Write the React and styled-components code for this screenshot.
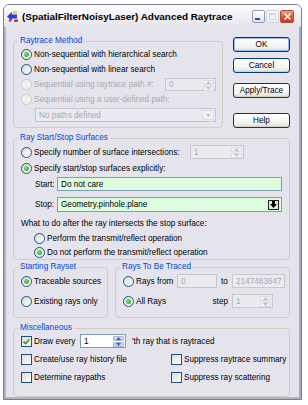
import React from 'react';
import styled, { createGlobalStyle, css } from 'styled-components';

const Global = createGlobalStyle`
  html, body { margin: 0; padding: 0; background: #ffffff; }
  body { font-family: "Liberation Sans", Arial, sans-serif; font-size: 8.2px; color: #000; }
  * { box-sizing: border-box; }
`;

const Window = styled.div`
  margin: 4px 0 0 3px;
  width: 299px;
  height: 396px;
  border: 1px solid #7c7c94;
  border-radius: 6px 6px 0 0;
  background: #e5e4ec;
  display: flex;
  flex-direction: column;
  overflow: hidden;
`;

const TitleBar = styled.div`
  height: 22px;
  flex: 0 0 22px;
  display: flex;
  align-items: center;
  padding: 0 7px 0 2px;
  background: linear-gradient(#fdfdfe, #eeeef3 60%, #e4e4ea);
`;

const TitleText = styled.div`
  flex: 1;
  margin-left: 3px;
  font-weight: bold;
  font-size: 9.9px;
  color: #000;
  white-space: nowrap;
`;

const TitleButtons = styled.div`
  display: flex;
  gap: 1px;
  align-items: center;
`;

const TitleButton = styled.div`
  width: 13px;
  height: 13px;
  border-radius: 2px;
  display: flex;
  align-items: center;
  justify-content: center;
  ${p => p.$kind === 'min' && css`
    border: 1px solid #8f9cb8;
    background: linear-gradient(#ffffff, #dfe2ec);
  `}
  ${p => p.$kind === 'max' && css`
    border: 1px solid #cdd1dc;
    background: linear-gradient(#fbfbfd, #eceef3);
  `}
  ${p => p.$kind === 'close' && css`
    width: 14px;
    border: 1px solid #b24a33;
    background: linear-gradient(#f2a088, #e05a38 50%, #c9391a);
  `}
`;

const Body = styled.div`
  flex: 1;
  display: flex;
  flex-direction: column;
  padding: 9px 9px 0 7px;
  border: 2px solid #b3b3c6;
  border-top: none;
  border-right-color: #a9a9bc;
`;

const TopRow = styled.div`
  display: flex;
  gap: 10px;
`;

const ButtonColumn = styled.div`
  display: flex;
  flex-direction: column;
  width: 57px;
`;

const PushButton = styled.button`
  height: 15px;
  margin-top: ${p => p.$mt}px;
  padding: 0;
  font: inherit;
  color: #000;
  border: 1px solid #003c74;
  border-radius: 3px;
  background: linear-gradient(#ffffff, #f3f3ef 70%, #dcdbd4);
  box-shadow: ${p => (p.$default ? 'inset 0 0 0 1px #97b8e8' : 'inset 0 -1px 0 #d6d0c5')};
`;

const Group = styled.fieldset`
  margin: ${p => p.$mt || 0}px 0 0;
  padding: ${p => p.$pt || 0}px ${p => p.$pr ?? 6}px 0 7px;
  border: 1px solid #d0d0c2;
  border-radius: 4px;
  min-width: 0;
  width: ${p => (p.$w ? `${p.$w}px` : 'auto')};
  flex: ${p => (p.$w ? '0 0 auto' : '1')};
  height: ${p => p.$h}px;
  display: flex;
  flex-direction: column;
`;

const Legend = styled.legend`
  color: #0046d5;
  padding: 0 2px;
  margin-left: -3px;
  line-height: 10px;
  font-size: 8.2px;
`;

const Row = styled.div`
  display: flex;
  align-items: center;
  height: ${p => p.$h || 15}px;
  margin-top: ${p => p.$mt || 0}px;
  margin-left: ${p => p.$ml || 0}px;
  white-space: nowrap;
`;

const OptionLabel = styled.label`
  display: flex;
  align-items: center;
  gap: 2px;
  color: ${p => (p.$disabled ? '#a9a9b2' : '#000')};
  width: ${p => (p.$w ? `${p.$w}px` : 'auto')};
  flex: ${p => (p.$grow ? '1' : '0 0 auto')};
  white-space: nowrap;
`;

const RadioCircle = styled.span`
  width: 11px;
  height: 11px;
  flex: 0 0 11px;
  border-radius: 50%;
  border: 1px solid ${p => (p.$disabled ? '#cfcdc4' : '#1c5180')};
  background: ${p => (p.$disabled ? '#f2f1f2' : 'linear-gradient(135deg, #dcdbd5, #ffffff)')};
  display: flex;
  align-items: center;
  justify-content: center;
  &::after {
    content: '';
    display: ${p => (p.$checked ? 'block' : 'none')};
    width: 5px;
    height: 5px;
    border-radius: 50%;
    background: radial-gradient(circle at 35% 35%, #7be07b, #21a121);
  }
`;

const CheckBox = styled.span`
  width: 11px;
  height: 11px;
  flex: 0 0 11px;
  border: 1px solid #1c5180;
  background: linear-gradient(135deg, #dcdbd5, #ffffff);
  display: flex;
  align-items: center;
  justify-content: center;
`;

const Radio = ({ checked, disabled, children, w, grow }) => (
  <OptionLabel $disabled={disabled} $w={w} $grow={grow}>
    <RadioCircle $checked={checked} $disabled={disabled} />
    <span>{children}</span>
  </OptionLabel>
);

const Check = ({ checked, children, w }) => (
  <OptionLabel $w={w}>
    <CheckBox>
      {checked && (
        <svg width="7" height="7" viewBox="0 0 7 7">
          <path d="M0.5 3.5 L2.7 5.6 L6.5 1.2" fill="none" stroke="#21a121" strokeWidth="1.6" />
        </svg>
      )}
    </CheckBox>
    <span>{children}</span>
  </OptionLabel>
);

const Field = styled.div`
  position: relative;
  display: flex;
  align-items: center;
  width: ${p => p.$w}px;
  height: ${p => p.$h || 14}px;
  margin-left: ${p => p.$ml || 0}px;
  padding-left: 3px;
  border: 1px solid ${p => (p.$disabled ? '#c8c8cc' : '#7f9db9')};
  background: ${p => (p.$green ? '#defcde' : p.$disabled ? '#ebeaf0' : '#ffffff')};
  color: ${p => (p.$disabled ? '#a9a9b2' : '#000')};
  white-space: nowrap;
`;

const FieldText = styled.span`
  flex: 1;
`;

const SpinButtons = styled.div`
  display: flex;
  flex-direction: column;
  align-self: stretch;
  width: 11px;
  margin: 1px;
  gap: 1px;
`;

const SpinPart = styled.div`
  flex: 1;
  border-radius: 1px;
  display: flex;
  align-items: center;
  justify-content: center;
  background: ${p => (p.$disabled ? '#f1f1f3' : '#c7d4f2')};
  border: 1px solid ${p => (p.$disabled ? '#dcdce0' : '#a7b8de')};
`;

const Arrow = ({ dir, color }) => (
  <svg width="5" height="3" viewBox="0 0 5 3">
    <path d={dir === 'up' ? 'M0 3 L2.5 0 L5 3 Z' : 'M0 0 L2.5 3 L5 0 Z'} fill={color} />
  </svg>
);

const Spin = ({ value, w, h, disabled, ml }) => (
  <Field $w={w} $h={h} $disabled={disabled} $ml={ml}>
    <FieldText>{value}</FieldText>
    <SpinButtons>
      <SpinPart $disabled={disabled}><Arrow dir="up" color={disabled ? '#c4c4c8' : '#4d6185'} /></SpinPart>
      <SpinPart $disabled={disabled}><Arrow dir="down" color={disabled ? '#c4c4c8' : '#4d6185'} /></SpinPart>
    </SpinButtons>
  </Field>
);

const ComboButton = styled.div`
  width: 12px;
  align-self: stretch;
  margin: 1px;
  display: flex;
  align-items: center;
  justify-content: center;
  background: #f1f1f3;
  border: 1px solid #dcdce0;
  border-radius: 1px;
`;

const DropButton = styled.div`
  width: 11px;
  height: 10px;
  margin-right: 2px;
  display: flex;
  align-items: center;
  justify-content: center;
  background: #e6e6e6;
  border: 1px solid #202020;
`;

const FieldLabel = styled.span`
  width: ${p => p.$w}px;
  flex: 0 0 auto;
`;

const PlainText = styled.div`
  margin-top: ${p => p.$mt || 0}px;
  height: ${p => p.$h}px;
  line-height: ${p => p.$h}px;
  white-space: nowrap;
`;

const BottomRow = styled.div`
  display: flex;
  gap: 7px;
  margin-top: 2px;
`;

const RaysGrid = styled.div`
  display: grid;
  grid-template-columns: 54px 40px 15px 53px;
  grid-template-rows: 14px 14px;
  row-gap: 6px;
  align-items: center;
  margin-top: 2px;
`;

const GridLabel = styled.span`
  grid-column: ${p => p.$col};
  justify-self: ${p => p.$justify || 'start'};
  padding-right: ${p => p.$pr || 0}px;
  white-space: nowrap;
`;

const MiscGrid = styled.div`
  display: grid;
  grid-template-columns: 150px 1fr;
  grid-template-rows: 14px 14px 14px;
  row-gap: 4px;
  align-items: center;
  margin-top: 1px;
`;

const DrawRow = styled.div`
  grid-column: 1 / 3;
  display: flex;
  align-items: center;
  white-space: nowrap;
`;

const AppIcon = () => (
  <svg width="13" height="13" viewBox="0 0 13 13">
    <path d="M1 6.5 L6 2 L6 4.5 L11 4.5 L11 8.5 L6 8.5 L6 11 Z" fill="#2a3fd0" />
    <rect x="7" y="1" width="4" height="2.5" fill="#f0d020" />
    <rect x="8" y="9.5" width="4" height="2.5" fill="#e03030" />
    <rect x="3" y="9" width="2" height="3" fill="#d040d0" />
  </svg>
);

export default function App() {
  return (
    <>
      <Global />
      <Window>
        <TitleBar>
          <AppIcon />
          <TitleText>(SpatialFilterNoisyLaser) Advanced Raytrace</TitleText>
          <TitleButtons>
            <TitleButton $kind="min">
              <svg width="11" height="11" viewBox="0 0 11 11">
                <rect x="2" y="7" width="5" height="2" fill="#3a4f7a" />
              </svg>
            </TitleButton>
            <TitleButton $kind="max">
              <svg width="11" height="11" viewBox="0 0 11 11">
                <rect x="2.5" y="2.5" width="6" height="6" fill="none" stroke="#cfd3dd" strokeWidth="1" />
                <rect x="2.5" y="2.5" width="6" height="1.5" fill="#cfd3dd" />
              </svg>
            </TitleButton>
            <TitleButton $kind="close">
              <svg width="11" height="11" viewBox="0 0 11 11">
                <path d="M2.5 2.5 L8.5 8.5 M8.5 2.5 L2.5 8.5" stroke="#ffffff" strokeWidth="1.6" />
              </svg>
            </TitleButton>
          </TitleButtons>
        </TitleBar>

        <Body>
          <TopRow>
            <Group $w={210} $h={92} $pt={1}>
              <Legend>Raytrace Method</Legend>
              <Row><Radio checked>Non-sequential with hierarchical search</Radio></Row>
              <Row><Radio>Non-sequential with linear search</Radio></Row>
              <Row>
                <Radio disabled grow>Sequential using raytrace path #:</Radio>
                <Spin value="0" w={51} h={13} disabled />
              </Row>
              <Row><Radio disabled>Sequential using a user-defined path:</Radio></Row>
              <Field $w={181} $h={14} $ml={14} $disabled style={{ marginTop: 1 }}>
                <FieldText>No paths defined</FieldText>
                <ComboButton><Arrow dir="down" color="#c4c4c8" /></ComboButton>
              </Field>
            </Group>
            <ButtonColumn>
              <PushButton $mt={1} $default>OK</PushButton>
              <PushButton $mt={6}>Cancel</PushButton>
              <PushButton $mt={10}>Apply/Trace</PushButton>
              <PushButton $mt={15}>Help</PushButton>
            </ButtonColumn>
          </TopRow>

          <Group $mt={5} $h={129} $pt={1}>
            <Legend>Ray Start/Stop Surfaces</Legend>
            <Row $h={16}>
              <Radio w={169}>Specify number of surface intersections:</Radio>
              <Spin value="1" w={54} h={14} disabled />
            </Row>
            <Row $h={16}><Radio checked>Specify start/stop surfaces explicitly:</Radio></Row>
            <Row $h={14} $mt={1} $ml={14}>
              <FieldLabel $w={22}>Start:</FieldLabel>
              <Field $w={225} $green>
                <FieldText>Do not care</FieldText>
              </Field>
            </Row>
            <Row $h={15} $mt={6} $ml={14}>
              <FieldLabel $w={22}>Stop:</FieldLabel>
              <Field $w={225} $h={15} $green>
                <FieldText>Geometry.pinhole.plane</FieldText>
                <DropButton>
                  <svg width="7" height="7" viewBox="0 0 7 7">
                    <path d="M2 0 H5 V3 H7 L3.5 7 L0 3 H2 Z" fill="#000" />
                  </svg>
                </DropButton>
              </Field>
            </Row>
            <PlainText $mt={6} $h={12}>What to do after the ray intersects the stop surface:</PlainText>
            <Row $h={14} $mt={1} $ml={13}><Radio>Perform the transmit/reflect operation</Radio></Row>
            <Row $h={14} $ml={13}><Radio checked>Do not perform the transmit/reflect operation</Radio></Row>
          </Group>

          <BottomRow>
            <Group $w={95} $h={56}>
              <Legend>Starting Rayset</Legend>
              <Row $h={14} $mt={2}><Radio checked>Traceable sources</Radio></Row>
              <Row $h={14} $mt={6}><Radio>Existing rays only</Radio></Row>
            </Group>
            <Group $h={56}>
              <Legend>Rays To Be Traced</Legend>
              <RaysGrid>
                <GridLabel $col="1"><Radio>Rays from</Radio></GridLabel>
                <Field $w={40} $disabled><FieldText>0</FieldText></Field>
                <GridLabel $col="3" $justify="center">to</GridLabel>
                <Field $w={53} $disabled><FieldText>2147483647</FieldText></Field>
                <GridLabel $col="1"><Radio checked>All Rays</Radio></GridLabel>
                <GridLabel $col="2 / 4" $justify="end" $pr={4}>step</GridLabel>
                <Spin value="1" w={41} h={14} disabled />
              </RaysGrid>
            </Group>
          </BottomRow>

          <Group $mt={5} $h={67}>
            <Legend>Miscellaneous</Legend>
            <MiscGrid>
              <DrawRow>
                <Check checked w={59}>Draw every</Check>
                <Spin value="1" w={46} h={14} />
                <span style={{ marginLeft: 6 }}>'th ray that is raytraced</span>
              </DrawRow>
              <Check>Create/use ray history file</Check>
              <Check>Suppress raytrace summary</Check>
              <Check>Determine raypaths</Check>
              <Check>Suppress ray scattering</Check>
            </MiscGrid>
          </Group>
        </Body>
      </Window>
    </>
  );
}
